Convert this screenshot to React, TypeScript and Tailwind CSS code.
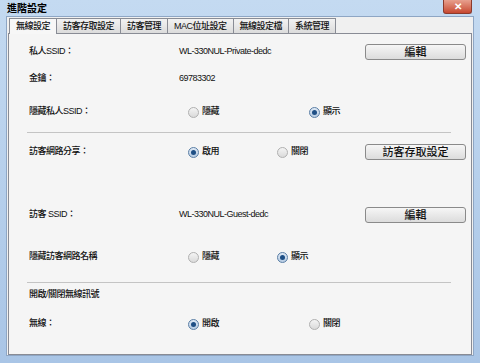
const tabs = ["無線設定", "訪客存取設定", "訪客管理", "MAC位址設定", "無線設定檔", "系統管理"];

function Radio({ label, checked }: { label: string; checked?: boolean }) {
  return (
    <span className="flex items-center gap-[3px]">
      <span
        className={
          checked
            ? "flex h-[11px] w-[11px] items-center justify-center rounded-full border border-[#5b7fa6] bg-gradient-to-b from-[#dfe9f5] to-[#b6cbe2]"
            : "flex h-[11px] w-[11px] items-center justify-center rounded-full border border-[#b0b0b0] bg-gradient-to-b from-[#f4f4f4] to-[#dadada]"
        }
      >
        {checked && <span className="h-[5px] w-[5px] rounded-full bg-[#1e4f85]" />}
      </span>
      <span>{label}</span>
    </span>
  );
}

function Button({ children }: { children: React.ReactNode }) {
  return (
    <button className="ml-auto flex h-[16px] w-[101px] items-center justify-center rounded-[3px] border border-[#8a8a8a] bg-gradient-to-b from-[#f6f6f6] to-[#dcdcdc] text-[11px] leading-none tracking-normal text-[#111]">
      {children}
    </button>
  );
}

function Row({ label, children, className }: { label: string; children?: React.ReactNode; className: string }) {
  return (
    <div className={"flex h-[16px] items-center pl-[20px] pr-[5px] " + className}>
      <span className="w-[150px] shrink-0">{label}</span>
      {children}
    </div>
  );
}

function Separator({ className }: { className: string }) {
  return <div className={"ml-[18px] h-px w-[424px] bg-[#c4c4c4] " + className} />;
}

export default function App() {
  return (
    <div
      className="relative h-[363px] w-[480px] overflow-hidden bg-gradient-to-b from-[#c4daf1] to-[#a9c5e6] text-[9px] font-medium tracking-[-0.5px] text-[#111]"
      style={{ fontFamily: '"Liberation Sans", "Noto Sans CJK TC", sans-serif' }}
    >
      <div className="absolute left-[7px] top-[4px] text-[10px] font-bold leading-none tracking-normal text-black">進階設定</div>
      <div className="absolute right-[8px] top-0 flex h-[14px] w-[29px] items-center justify-center rounded-b-[3px] border border-t-0 border-[#8b3a2c] bg-gradient-to-b from-[#e7a08e] to-[#c6462f] text-[10px] font-bold leading-none tracking-normal text-white">
        ✕
      </div>

      <div className="absolute bottom-[7px] left-[6px] right-[6px] top-[16px] border border-[#8ea6c4] bg-[#f0f0f0] px-px">
        <div className="flex h-[16px] items-end pl-px">
          {tabs.map((t, i) => (
            <div
              key={t}
              className={
                i === 0
                  ? "relative z-10 -mb-px flex h-[16px] items-center border border-b-0 border-[#898c95] bg-[#f7f7f7] px-[6px] leading-none"
                  : "-ml-px flex h-[15px] items-center border border-b-0 border-[#898c95] bg-gradient-to-b from-[#f2f2f2] to-[#dcdcdc] px-[6px] leading-none"
              }
            >
              {t}
            </div>
          ))}
        </div>
        <div className="h-[322px] border border-[#898c95] bg-[#f5f5f5] pt-[10px]">
          <Row label="私人SSID：" className="">
            <span>WL-330NUL-Private-dedc</span>
            <Button>編輯</Button>
          </Row>
          <Row label="金鑰：" className="mt-[11px]">
            <span>69783302</span>
          </Row>
          <Row label="隱藏私人SSID：" className="mt-[17px]">
            <span className="ml-[9px] w-[121px]">
              <Radio label="隱藏" />
            </span>
            <Radio label="顯示" checked />
          </Row>
          <Separator className="mt-[12px]" />
          <Row label="訪客網路分享：" className="mt-[11px]">
            <span className="ml-[9px] w-[89px]">
              <Radio label="啟用" checked />
            </span>
            <Radio label="關閉" />
            <Button>訪客存取設定</Button>
          </Row>
          <Row label="訪客 SSID：" className="mt-[47px]">
            <span>WL-330NUL-Guest-dedc</span>
            <Button>編輯</Button>
          </Row>
          <Row label="隱藏訪客網路名稱" className="mt-[26px]">
            <span className="ml-[9px] w-[89px]">
              <Radio label="隱藏" />
            </span>
            <Radio label="顯示" checked />
          </Row>
          <Separator className="mt-[17px]" />
          <Row label="開啟/關閉無線訊號" className="mt-[4px]" />
          <Row label="無線：" className="mt-[13px]">
            <span className="ml-[9px] w-[121px]">
              <Radio label="開啟" checked />
            </span>
            <Radio label="關閉" />
          </Row>
        </div>
      </div>
    </div>
  );
}
